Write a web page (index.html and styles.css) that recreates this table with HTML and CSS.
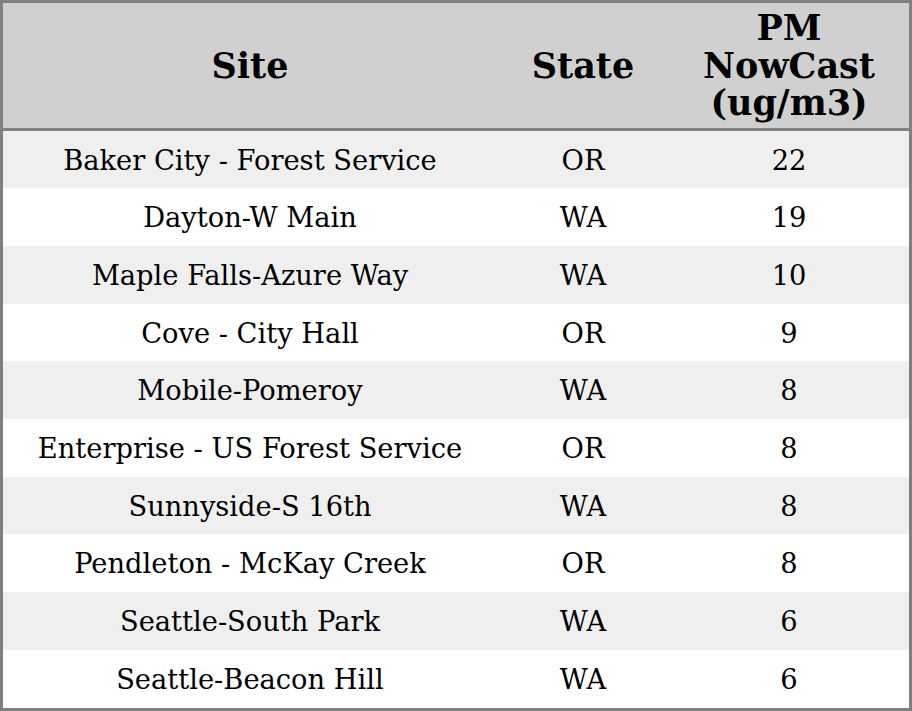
FILE: index.html
```html
<!DOCTYPE html>
<html>
<head>
<meta charset="utf-8">
<link rel="stylesheet" href="styles.css">
</head>
<body>
<table class="aq-table">
  <colgroup>
    <col class="col-site">
    <col class="col-state">
    <col class="col-pm">
  </colgroup>
  <thead>
    <tr>
      <th>Site</th>
      <th>State</th>
      <th>PM<br>NowCast<br>(ug/m3)</th>
    </tr>
  </thead>
  <tbody>
    <tr><td>Baker City - Forest Service</td><td>OR</td><td>22</td></tr>
    <tr><td>Dayton-W Main</td><td>WA</td><td>19</td></tr>
    <tr><td>Maple Falls-Azure Way</td><td>WA</td><td>10</td></tr>
    <tr><td>Cove - City Hall</td><td>OR</td><td>9</td></tr>
    <tr><td>Mobile-Pomeroy</td><td>WA</td><td>8</td></tr>
    <tr><td>Enterprise - US Forest Service</td><td>OR</td><td>8</td></tr>
    <tr><td>Sunnyside-S 16th</td><td>WA</td><td>8</td></tr>
    <tr><td>Pendleton - McKay Creek</td><td>OR</td><td>8</td></tr>
    <tr><td>Seattle-South Park</td><td>WA</td><td>6</td></tr>
    <tr><td>Seattle-Beacon Hill</td><td>WA</td><td>6</td></tr>
  </tbody>
</table>
</body>
</html>
```
FILE: styles.css
```css
html, body {
  margin: 0;
  padding: 0;
  background: #ffffff;
}
.aq-table {
  width: 912px;
  border: 3px solid #808080;
  border-spacing: 0;
  table-layout: fixed;
  font-family: "DejaVu Serif", serif;
  color: #000;
}
.col-site { width: 494px; }
.col-state { width: 172px; }
.col-pm { width: 240px; }
.aq-table th {
  background: #d0d0d0;
  font-size: 35px;
  line-height: 37.5px;
  font-weight: bold;
  padding: 6px 2px;
  border-bottom: 3px solid #808080;
  text-align: center;
  vertical-align: middle;
}
.aq-table td {
  font-size: 27.3px;
  line-height: 31.7px;
  padding: 14px 2px 12px;
  text-align: center;
  vertical-align: middle;
  white-space: nowrap;
}
.aq-table tbody tr:nth-child(odd) td {
  background: #efefef;
}
.aq-table tbody tr:nth-child(even) td {
  background: #ffffff;
}
```
